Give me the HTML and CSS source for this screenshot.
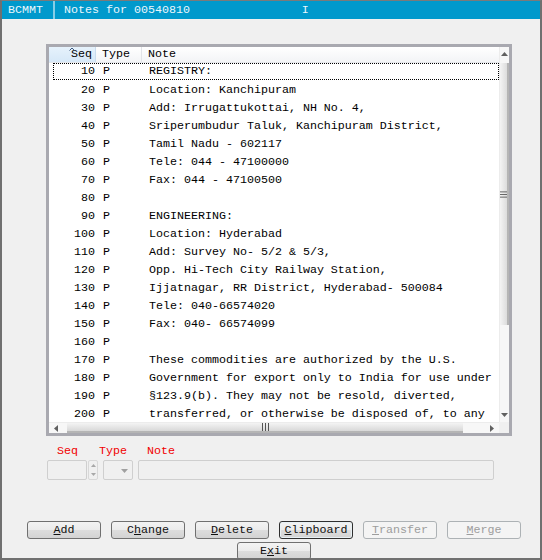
FILE: index.html
```html
<!DOCTYPE html>
<html>
<head>
<meta charset="utf-8">
<link rel="stylesheet" href="styles.css">
</head>
<body>
<div class="window">
  <div class="titlebar">
    <div class="t-app">BCMMT</div>
    <div class="t-title">Notes for 00540810                I</div>
  </div>
  <div class="content">
    <div class="listbox">
      <div class="listmain">
        <div class="lheader">
          <div class="h-seq">Seq<svg class="sort" width="6" height="4" viewBox="0 0 6 4"><path d="M0.5 3.5 L3 1 L5.5 3.5" fill="none" stroke="#3d5a80" stroke-width="1"/></svg></div>
          <div class="h-type">Type</div>
          <div class="h-note">Note</div>
        </div>
        <div class="rows">
          <div class="row focus"><span class="c-seq">10</span><span class="c-type">P</span><span class="c-note">REGISTRY:</span></div>
          <div class="row"><span class="c-seq">20</span><span class="c-type">P</span><span class="c-note">Location: Kanchipuram</span></div>
          <div class="row"><span class="c-seq">30</span><span class="c-type">P</span><span class="c-note">Add: Irrugattukottai, NH No. 4,</span></div>
          <div class="row"><span class="c-seq">40</span><span class="c-type">P</span><span class="c-note">Sriperumbudur Taluk, Kanchipuram District,</span></div>
          <div class="row"><span class="c-seq">50</span><span class="c-type">P</span><span class="c-note">Tamil Nadu - 602117</span></div>
          <div class="row"><span class="c-seq">60</span><span class="c-type">P</span><span class="c-note">Tele: 044 - 47100000</span></div>
          <div class="row"><span class="c-seq">70</span><span class="c-type">P</span><span class="c-note">Fax: 044 - 47100500</span></div>
          <div class="row"><span class="c-seq">80</span><span class="c-type">P</span><span class="c-note"></span></div>
          <div class="row"><span class="c-seq">90</span><span class="c-type">P</span><span class="c-note">ENGINEERING:</span></div>
          <div class="row"><span class="c-seq">100</span><span class="c-type">P</span><span class="c-note">Location: Hyderabad</span></div>
          <div class="row"><span class="c-seq">110</span><span class="c-type">P</span><span class="c-note">Add: Survey No- 5/2 &amp; 5/3,</span></div>
          <div class="row"><span class="c-seq">120</span><span class="c-type">P</span><span class="c-note">Opp. Hi-Tech City Railway Station,</span></div>
          <div class="row"><span class="c-seq">130</span><span class="c-type">P</span><span class="c-note">Ijjatnagar, RR District, Hyderabad- 500084</span></div>
          <div class="row"><span class="c-seq">140</span><span class="c-type">P</span><span class="c-note">Tele: 040-66574020</span></div>
          <div class="row"><span class="c-seq">150</span><span class="c-type">P</span><span class="c-note">Fax: 040- 66574099</span></div>
          <div class="row"><span class="c-seq">160</span><span class="c-type">P</span><span class="c-note"></span></div>
          <div class="row"><span class="c-seq">170</span><span class="c-type">P</span><span class="c-note">These commodities are authorized by the U.S.</span></div>
          <div class="row"><span class="c-seq">180</span><span class="c-type">P</span><span class="c-note">Government for export only to India for use under</span></div>
          <div class="row"><span class="c-seq">190</span><span class="c-type">P</span><span class="c-note">§123.9(b). They may not be resold, diverted,</span></div>
          <div class="row"><span class="c-seq">200</span><span class="c-type">P</span><span class="c-note">transferred, or otherwise be disposed of, to any</span></div>
        </div>
      </div>
      <div class="vscroll">
        <div class="sarrow"><svg width="7" height="4" viewBox="0 0 7 4"><path d="M0 4 L3.5 0 L7 4 Z" fill="#606060"/></svg></div>
        <div class="vthumb"><svg width="8" height="7" viewBox="0 0 8 7"><path d="M0 0.5 H8 M0 3.5 H8 M0 6.5 H8" stroke="#555" stroke-width="1"/></svg></div>
        <div class="sspace"></div>
        <div class="sarrow"><svg width="7" height="4" viewBox="0 0 7 4"><path d="M0 0 L3.5 4 L7 0 Z" fill="#606060"/></svg></div>
      </div>
      <div class="hscroll">
        <div class="harrow"><svg width="4" height="7" viewBox="0 0 4 7"><path d="M4 0 L0 3.5 L4 7 Z" fill="#606060"/></svg></div>
        <div class="hthumb"><svg width="7" height="8" viewBox="0 0 7 8"><path d="M0.5 0 V8 M3.5 0 V8 M6.5 0 V8" stroke="#555" stroke-width="1"/></svg></div>
        <div class="sspace"></div>
        <div class="harrow"><svg width="4" height="7" viewBox="0 0 4 7"><path d="M0 0 L4 3.5 L0 7 Z" fill="#606060"/></svg></div>
      </div>
      <div class="corner"></div>
    </div>

    <div class="labels">
      <span class="lbl l-seq">Seq</span>
      <span class="lbl l-type">Type</span>
      <span class="lbl l-note">Note</span>
    </div>
    <div class="inputs">
      <div class="in-seq"></div>
      <div class="spin">
        <div class="spin-btn"><svg width="5" height="3" viewBox="0 0 5 3"><path d="M0 3 L2.5 0 L5 3 Z" fill="#a8a8a8"/></svg></div>
        <div class="spin-btn"><svg width="5" height="3" viewBox="0 0 5 3"><path d="M0 0 L2.5 3 L5 0 Z" fill="#a8a8a8"/></svg></div>
      </div>
      <div class="in-type"><svg width="7" height="4" viewBox="0 0 7 4"><path d="M0 0 L3.5 4 L7 0 Z" fill="#a0a0a0"/></svg></div>
      <div class="in-note"></div>
    </div>

    <div class="buttons">
      <div class="btn"><u>A</u>dd</div>
      <div class="btn">C<u>h</u>ange</div>
      <div class="btn"><u>D</u>elete</div>
      <div class="btn default"><u>C</u>lipboard</div>
      <div class="btn disabled"><u>T</u>ransfer</div>
      <div class="btn disabled"><u>M</u>erge</div>
    </div>
    <div class="exitrow">
      <div class="btn">E<u>x</u>it</div>
    </div>
  </div>
</div>
</body>
</html>
```

FILE: styles.css
```css
html, body {
  margin: 0;
  padding: 0;
  background: #f0f0f0;
}
body {
  font-family: "Liberation Mono", "DejaVu Sans Mono", monospace;
  font-size: 11.667px;
  color: #000;
}
.window {
  width: 542px;
  height: 560px;
  box-sizing: border-box;
  border-top: 1px solid #7a7a7a;
  border-left: 2px solid #707070;
  border-right: 2px solid #707070;
  border-bottom: 2px solid #707070;
  background: #f0f0f0;
  display: flex;
  flex-direction: column;
  overflow: hidden;
}
.titlebar {
  height: 18px;
  flex: none;
  background: #0099cc;
  color: #eaf7fc;
  display: flex;
  align-items: center;
  line-height: 18px;
}
.t-app {
  width: 45px;
  padding-left: 6px;
  height: 18px;
  border-right: 2px solid #86cde6;
}
.t-title {
  padding-left: 9px;
  white-space: pre;
}
.content {
  flex: 1;
  overflow: hidden;
  display: flex;
  flex-direction: column;
}
.listbox {
  margin-top: 25px;
  margin-left: 44px;
  width: 466px;
  height: 392px;
  box-sizing: border-box;
  border: 3px solid #a9a9b0;
  background: #fff;
  display: grid;
  grid-template-columns: 1fr 10px;
  grid-template-rows: 1fr 11px;
  flex: none;
}
.listmain {
  overflow: hidden;
  min-width: 0;
  min-height: 0;
}
.lheader {
  display: grid;
  grid-template-columns: 47px 46px 1fr;
  height: 15px;
  line-height: 15px;
  background: linear-gradient(#ffffff, #f3f4f6);
  border-bottom: 1px solid #e4e6ea;
}
.h-seq {
  position: relative;
  text-align: right;
  padding-right: 3px;
  background: linear-gradient(#e6f2fc, #d6e8f8);
  border-right: 1px solid #c9dcee;
}
.sort {
  position: absolute;
  left: 20px;
  top: 0;
}
.h-type {
  padding-left: 6px;
  border-right: 1px solid #e2e4e8;
}
.h-note {
  padding-left: 6px;
}
.rows {
  display: flex;
  flex-direction: column;
}
.row {
  display: grid;
  grid-template-columns: 43px 46px 1fr;
  height: 18px;
  line-height: 18px;
  margin-left: 4px;
  white-space: nowrap;
  flex: none;
}
.row.focus {
  outline: 1px dotted #000;
  outline-offset: -1px;
  height: 17px;
  margin-bottom: 1px;
  line-height: 17px;
}
.c-seq {
  text-align: right;
  padding-right: 1px;
}
.c-type {
  padding-left: 7px;
}
.c-note {
  padding-left: 7px;
  overflow: hidden;
}
.vscroll {
  display: flex;
  flex-direction: column;
  background: #f7f7f7;
  border-left: 1px solid #ececec;
  align-items: stretch;
}
.sarrow {
  height: 14px;
  display: flex;
  align-items: center;
  justify-content: center;
  flex: none;
}
.vthumb {
  height: 262px;
  margin-top: 2px;
  flex: none;
  box-sizing: border-box;
  background: linear-gradient(90deg, #f4f4f4, #dcdcdc);
  border-right: 2px solid #b5b5b5;
  display: flex;
  align-items: center;
  justify-content: center;
}
.sspace {
  flex: 1;
}
.hscroll {
  display: flex;
  background: #f7f7f7;
  border-top: 1px solid #ececec;
}
.harrow {
  width: 14px;
  display: flex;
  align-items: center;
  justify-content: center;
  flex: none;
}
.hthumb {
  width: 396px;
  margin-left: 4px;
  flex: none;
  box-sizing: border-box;
  background: linear-gradient(#f4f4f4, #d8d8d8);
  border-bottom: 2px solid #b5b5b5;
  display: flex;
  align-items: center;
  justify-content: center;
}
.corner {
  background: #f0f0f0;
}
.labels {
  margin-top: 6px;
  height: 18px;
  line-height: 18px;
  display: flex;
  color: #f00000;
  flex: none;
}
.l-seq { margin-left: 55px; }
.l-type { margin-left: 21px; }
.l-note { margin-left: 20px; }
.inputs {
  height: 20px;
  display: flex;
  margin-left: 45px;
  flex: none;
}
.in-seq, .in-note, .in-type, .spin {
  box-sizing: border-box;
  border: 1px solid #cfcfcf;
  border-radius: 2px;
  background: #f0f0f0;
}
.in-seq { width: 40px; }
.spin {
  width: 10px;
  margin-left: 1px;
  display: flex;
  flex-direction: column;
  border-color: #d8d8d8;
}
.spin-btn {
  flex: 1;
  display: flex;
  align-items: center;
  justify-content: center;
}
.in-type {
  width: 30px;
  margin-left: 5px;
  display: flex;
  align-items: center;
  justify-content: flex-end;
  padding-right: 4px;
  padding-top: 1px;
}
.in-note {
  width: 356px;
  margin-left: 5px;
}
.buttons {
  margin-top: 41px;
  margin-left: 25px;
  display: flex;
  gap: 10px;
  flex: none;
}
.btn {
  width: 74px;
  height: 18px;
  box-sizing: border-box;
  border: 1px solid #707070;
  border-radius: 3px;
  background: linear-gradient(#f3f3f3 0%, #ebebeb 50%, #dddddd 51%, #d3d3d3 100%);
  text-align: center;
  line-height: 16px;
  color: #111;
  flex: none;
}
.btn u {
  text-decoration: underline;
  text-underline-offset: 1px;
}
.btn.default {
  border-color: #2f2f2f;
  box-shadow: inset 0 0 0 1px #e8f0f4;
}
.btn.disabled {
  background: #f4f4f4;
  border-color: #adb2b5;
  color: #9d9d9d;
}
.exitrow {
  margin-top: 3px;
  margin-left: 235px;
  display: flex;
  flex: none;
}
```
